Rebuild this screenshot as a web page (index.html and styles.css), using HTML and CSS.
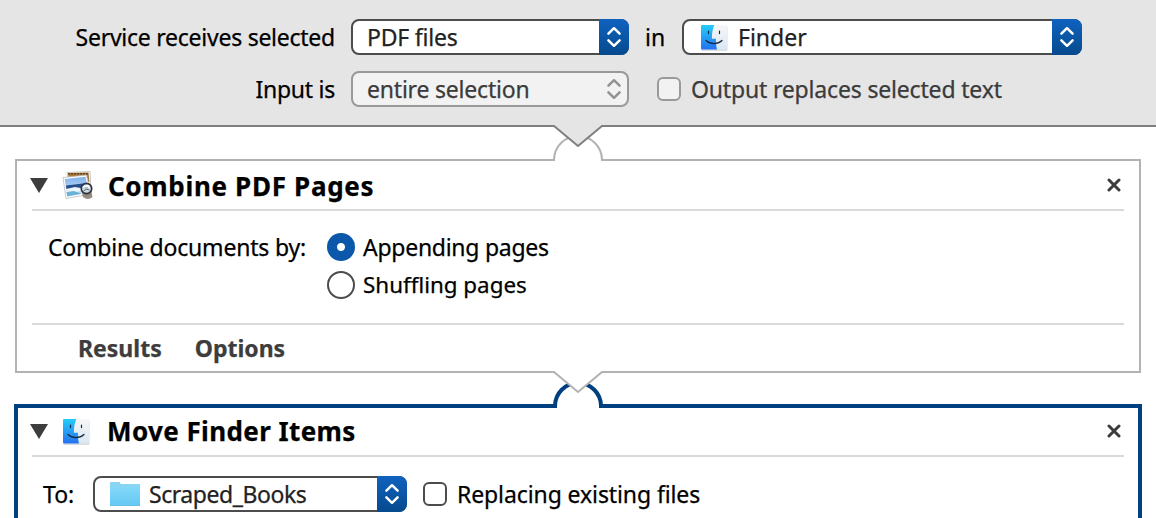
FILE: index.html
```
<!DOCTYPE html>
<html lang="en">
<head>
<meta charset="utf-8">
<title>Automator workflow</title>
<link rel="stylesheet" href="styles.css">
</head>
<body>
<svg class="defs" width="0" height="0" aria-hidden="true">
  <defs>
    <linearGradient id="fb" x1="0" y1="0" x2="0" y2="1"><stop offset="0" stop-color="#24cdf9"/><stop offset="1" stop-color="#2472f1"/></linearGradient>
    <linearGradient id="fw" x1="0" y1="0" x2="0" y2="1"><stop offset="0" stop-color="#f7f7f8"/><stop offset="1" stop-color="#dae7f3"/></linearGradient>
    <linearGradient id="fold" x1="0" y1="0" x2="0" y2="1"><stop offset="0" stop-color="#83d8fa"/><stop offset="1" stop-color="#65c8f3"/></linearGradient>
    <linearGradient id="sky" x1="0" y1="0" x2="0" y2="1"><stop offset="0" stop-color="#7fb1ec"/><stop offset="1" stop-color="#d9ebfa"/></linearGradient>
    <symbol id="finder" viewBox="0 0 28 28">
      <rect x="1" y="2" width="26.5" height="25" rx="1.5" fill="#00000022"/>
      <rect x="1" y="1" width="26" height="24.5" rx="1.5" fill="url(#fw)"/>
      <path d="M2 1H14.3C12.4 5.5 11.9 10 11.9 14.7H16C15.8 18.5 16.2 22 17 25.5H2.2Q1 25.5 1 24V2.2Q1 1 2 1Z" fill="url(#fb)"/>
      <path d="M8.5 7.2v2.4M19.5 7.2v2.4M6 16.5C10.5 20.7 17.5 20.7 22 16.5" fill="none" stroke="#17283d" stroke-width="1.2" stroke-linecap="round"/>
    </symbol>
    <symbol id="arrows" viewBox="0 0 16 24">
      <path d="M2.4 8.7L8 3.2l5.600 5.500M2.400 15.300L8 20.800l5.600-5.500" fill="none" stroke="currentColor" stroke-width="2.500" stroke-linecap="round" stroke-linejoin="round"/>
    </symbol>
    <symbol id="close" viewBox="0 0 14 14"><path d="M2 2l10 10M12 2L2 12" stroke="#3c3c3e" stroke-width="3" stroke-linecap="round"/></symbol>
    <symbol id="triangle" viewBox="0 0 18 15"><path d="M0 0H18L9 15Z" fill="#3d3d3d"/></symbol>
  </defs>
</svg>

<header class="service">
  <div class="row">
    <label class="caption"><span class="t-service">Service receives selected</span></label>
    <div class="select narrow"><span class="value t-pdf">PDF files</span><span class="cap"><svg><use href="#arrows"/></svg></span></div>
    <span class="in">in</span>
    <div class="select wide"><svg class="app"><use href="#finder"/></svg><span class="value t-finder">Finder</span><span class="cap"><svg><use href="#arrows"/></svg></span></div>
  </div>
  <div class="row">
    <label class="caption"><span class="t-input">Input is</span></label>
    <div class="select narrow disabled"><span class="value t-entire">entire selection</span><span class="cap"><svg><use href="#arrows"/></svg></span></div>
    <span class="check disabled"></span>
    <span class="label dim t-output">Output replaces selected text</span>
  </div>
</header>

<main class="workflow">
  <section class="action">
    <svg class="joint" viewBox="0 0 60 40">
      <path d="M6 36A24 24 0 0 1 54 36V40H6Z" fill="#fff"/>
      <path d="M5 36H7M53 36H55" stroke="#b2b2b2" stroke-width="2"/>
      <path d="M6 37V36A24 24 0 0 1 54 36V37" fill="none" stroke="#b2b2b2" stroke-width="2"/>
      <path d="M5 0H55L54 2L30 22L6 2Z" fill="#e5e5e5"/>
      <path d="M5 2H6L30 22L54 2H55" fill="none" stroke="#7f7f7f" stroke-width="2"/>
    </svg>
    <div class="title">
      <svg class="tri"><use href="#triangle"/></svg>
      <svg class="preview" viewBox="0 0 32 30">
        <path d="M5 2.500L28 1.500L29 22L8 24Z" fill="#fff" stroke="#aaa" stroke-width=".7"/>
        <path d="M6 3L26.500 2.500L27.500 12H7Z" fill="#a9783c"/>
        <path d="M6 3.700h20.500" stroke="#694719" stroke-width="1.500" stroke-dasharray="2 1"/>
        <path d="M1 7.500L24.500 5L29 24L4 28.500Z" fill="#fff" stroke="#b5b5b5" stroke-width=".7"/>
        <path d="M2.700 9L23.500 6.700L26.700 22L5.200 26.500Z" fill="url(#sky)"/>
        <path d="M4 15.500L25 13L26.500 19.500L4.500 20.500Z" fill="#244f8c"/>
        <path d="M4 19L13 17L24 19L15 22L4.500 23Z" fill="#eef5f8"/>
        <path d="M4.500 22L12 21L20 23.800L5.200 26.500Z" fill="#6bb4d6"/>
        <path d="M20 23L29 20L30.500 27Q26 31 21 27Z" fill="#736858" opacity=".75"/>
        <circle cx="24.500" cy="18.500" r="5.200" fill="#dbe4e9" fill-opacity=".8" stroke="#30343a" stroke-width="1.700"/>
        <path d="M20.500 17.500q4-3 7-.5" fill="none" stroke="#fff" stroke-width="1.500"/>
        <path d="M21.500 21q3-3 6-1" fill="none" stroke="#596676" stroke-width="1"/>
      </svg>
      <h2 class="t-combine">Combine PDF Pages</h2>
      <svg class="x"><use href="#close"/></svg>
    </div>
    <div class="body">
      <span class="label t-docs">Combine documents by:</span>
      <div class="radios">
        <div class="option"><span class="radio on"></span><span class="label t-append">Appending pages</span></div>
        <div class="option"><span class="radio"></span><span class="label t-shuffle">Shuffling pages</span></div>
      </div>
    </div>
    <footer class="tabs"><span class="t-results">Results</span><span class="t-options">Options</span></footer>
  </section>

  <section class="action selected">
    <svg class="joint" viewBox="0 0 60 40">
      <path d="M7 37A23 23 0 0 1 53 37V40H7Z" fill="#fff"/>
      <path d="M7 39V37A23 23 0 0 1 53 37V39" fill="none" stroke="#004080" stroke-width="4"/>
      <path d="M5 0H55L54 3L30 23L6 3Z" fill="#fff"/>
      <path d="M5 3H6L30 23L54 3H55" fill="none" stroke="#b2b2b2" stroke-width="2"/>
    </svg>
    <div class="title">
      <svg class="tri"><use href="#triangle"/></svg>
      <svg class="app"><use href="#finder"/></svg>
      <h2 class="t-move">Move Finder Items</h2>
      <svg class="x"><use href="#close"/></svg>
    </div>
    <div class="destination">
      <span class="label t-to">To:</span>
      <div class="select folder">
        <svg class="foldericon" viewBox="0 0 32 28"><path d="M1 26V3.500Q1 2 2.500 2H9.500Q11 2 11.500 4H29.500Q31 4 31 5.500V26Z" fill="#6bb8df"/><path d="M1 25V3.500Q1 2 2.500 2H9.500Q11 2 11.500 4H29.500Q31 4 31 5.500V25Z" fill="#8bd5f4"/><path d="M1 7H31V24.500Q31 25.500 30 25.500H2Q1 25.500 1 24.500Z" fill="url(#fold)"/></svg>
        <span class="value t-books">Scraped_Books</span><span class="cap"><svg><use href="#arrows"/></svg></span>
      </div>
      <span class="check"></span>
      <span class="label t-replace">Replacing existing files</span>
    </div>
  </section>
</main>
</body>
</html>
```
FILE: styles.css
```
* { box-sizing: border-box; }
body {
  margin: 0;
  height: 518px;
  overflow: hidden;
  background: #fff;
  color: #000;
  font: 23px/34px "Noto Sans", "Open Sans", sans-serif;
  -webkit-text-stroke: 0.25px currentColor;
  white-space: nowrap;
}
svg { display: block; flex: none; }
.defs { position: absolute; }

.service {
  height: 127px;
  padding-top: 19px;
  display: flex;
  flex-direction: column;
  gap: 16px;
  background: #e5e5e5;
  border-bottom: 2px solid #7f7f7f;
}
.row { display: flex; align-items: center; height: 36px; }
.caption { width: 335px; margin-right: 16px; text-align: right; }
.in { width: 19px; margin: 0 18px 0 16px; }
.dim { color: #3b3b3b; }

.select {
  position: relative;
  flex: none;
  display: flex;
  align-items: center;
  height: 36px;
  padding: 0 46px 0 14px;
  border: 2px solid #4c4c4c;
  border-radius: 8px;
  background: #fff;
  color: #222;
}
.cap {
  position: absolute;
  top: -2px;
  right: -2px;
  width: 30px;
  height: 36px;
  display: grid;
  place-items: center;
  border-radius: 0 8px 8px 0;
  background: linear-gradient(#0f62bf, #064a8e);
  color: #fff;
}
.cap svg { width: 16px; height: 24px; margin-right: 1px; }
.narrow { width: 278px; }
.wide { width: 400px; }
.folder { width: 314px; }
.select.disabled { border-color: #999; background: #f2f2f2; color: #3b3b3b; }
.disabled .cap { background: none; color: #929292; }
.app { width: 28px; height: 28px; }
.select .app { margin: 2px 10px 0 2px; }
.foldericon { width: 32px; height: 28px; margin-right: 8px; }

.check {
  flex: none;
  width: 24px;
  height: 24px;
  border: 2px solid #4c4c4c;
  border-radius: 6px;
  background: #fff;
}
.check.disabled { margin: 0 10px 0 28px; border-color: #999; background: #f2f2f2; }

.workflow { padding: 32px 14px 0; }
.action {
  position: relative;
  height: 214px;
  margin: 0 1px;
  padding: 0 15px;
  border: 2px solid #b2b2b2;
  background: #fff;
}
.joint { position: absolute; width: 60px; height: 40px; left: 531px; top: -37px; }
.title {
  display: flex;
  align-items: center;
  height: 50px;
  border-bottom: 2px solid #d9d9d9;
}
.tri { width: 18px; height: 15px; margin: 0 14px 0 -2px; }
.preview { width: 32px; height: 30px; margin-right: 14px; }
h2 { margin: 0; padding-top: 2px; font-size: 26px; line-height: 34px; font-weight: 700; }
.x { width: 14px; height: 14px; margin-left: auto; margin-right: 3px; }
.body { display: flex; height: 112px; padding: 19px 16px 0; }
.body > .label { width: 279px; }
.radios { display: flex; flex-direction: column; gap: 4px; }
.option { display: flex; align-items: center; height: 34px; gap: 8px; }
.radio { width: 28px; height: 28px; border: 2px solid #4c4c4c; border-radius: 50%; }
.radio.on { border: 0; background: radial-gradient(circle, #fff 3.500px, #0b58aa 4.500px); }
.tabs {
  display: flex;
  gap: 33px;
  height: 48px;
  padding: 6px 46px 0;
  border-top: 2px solid #d9d9d9;
  color: #3d3d3d;
  font-weight: 700;
}
.selected {
  height: 114px;
  margin: 31px 0 0;
  padding: 0 14px;
  border: 4px solid #004080;
  border-bottom: 0;
}
.selected .joint { left: 530px; top: -39px; }
.selected .title { height: 49px; }
.selected .app { margin: 0 16px 0 0; }
.selected h2 { padding: 0 0 1px; }
.selected .x { margin-bottom: 2px; }
.destination { display: flex; align-items: center; height: 36px; margin-top: 19px; padding-left: 11px; }
.t-to { width: 50px; }
.destination .check { margin: 0 10px 0 16px; }

/* Per-label tracking */
.t-service { letter-spacing: -0.25px; }
.t-input { letter-spacing: -0.25px; }
.t-pdf { letter-spacing: -0.2px; }
.t-entire { letter-spacing: -0.2px; }
.t-output { letter-spacing: -0.17px; }
.t-combine { letter-spacing: 0.68px; }
.t-move { letter-spacing: 0.4px; margin-left: 1px; }
.t-docs { letter-spacing: -0.2px; }
.t-append { letter-spacing: -0.27px; }
.t-shuffle { font-size: 22.4px; }
.t-books { letter-spacing: -0.45px; }
.t-replace { letter-spacing: -0.1px; }
```
